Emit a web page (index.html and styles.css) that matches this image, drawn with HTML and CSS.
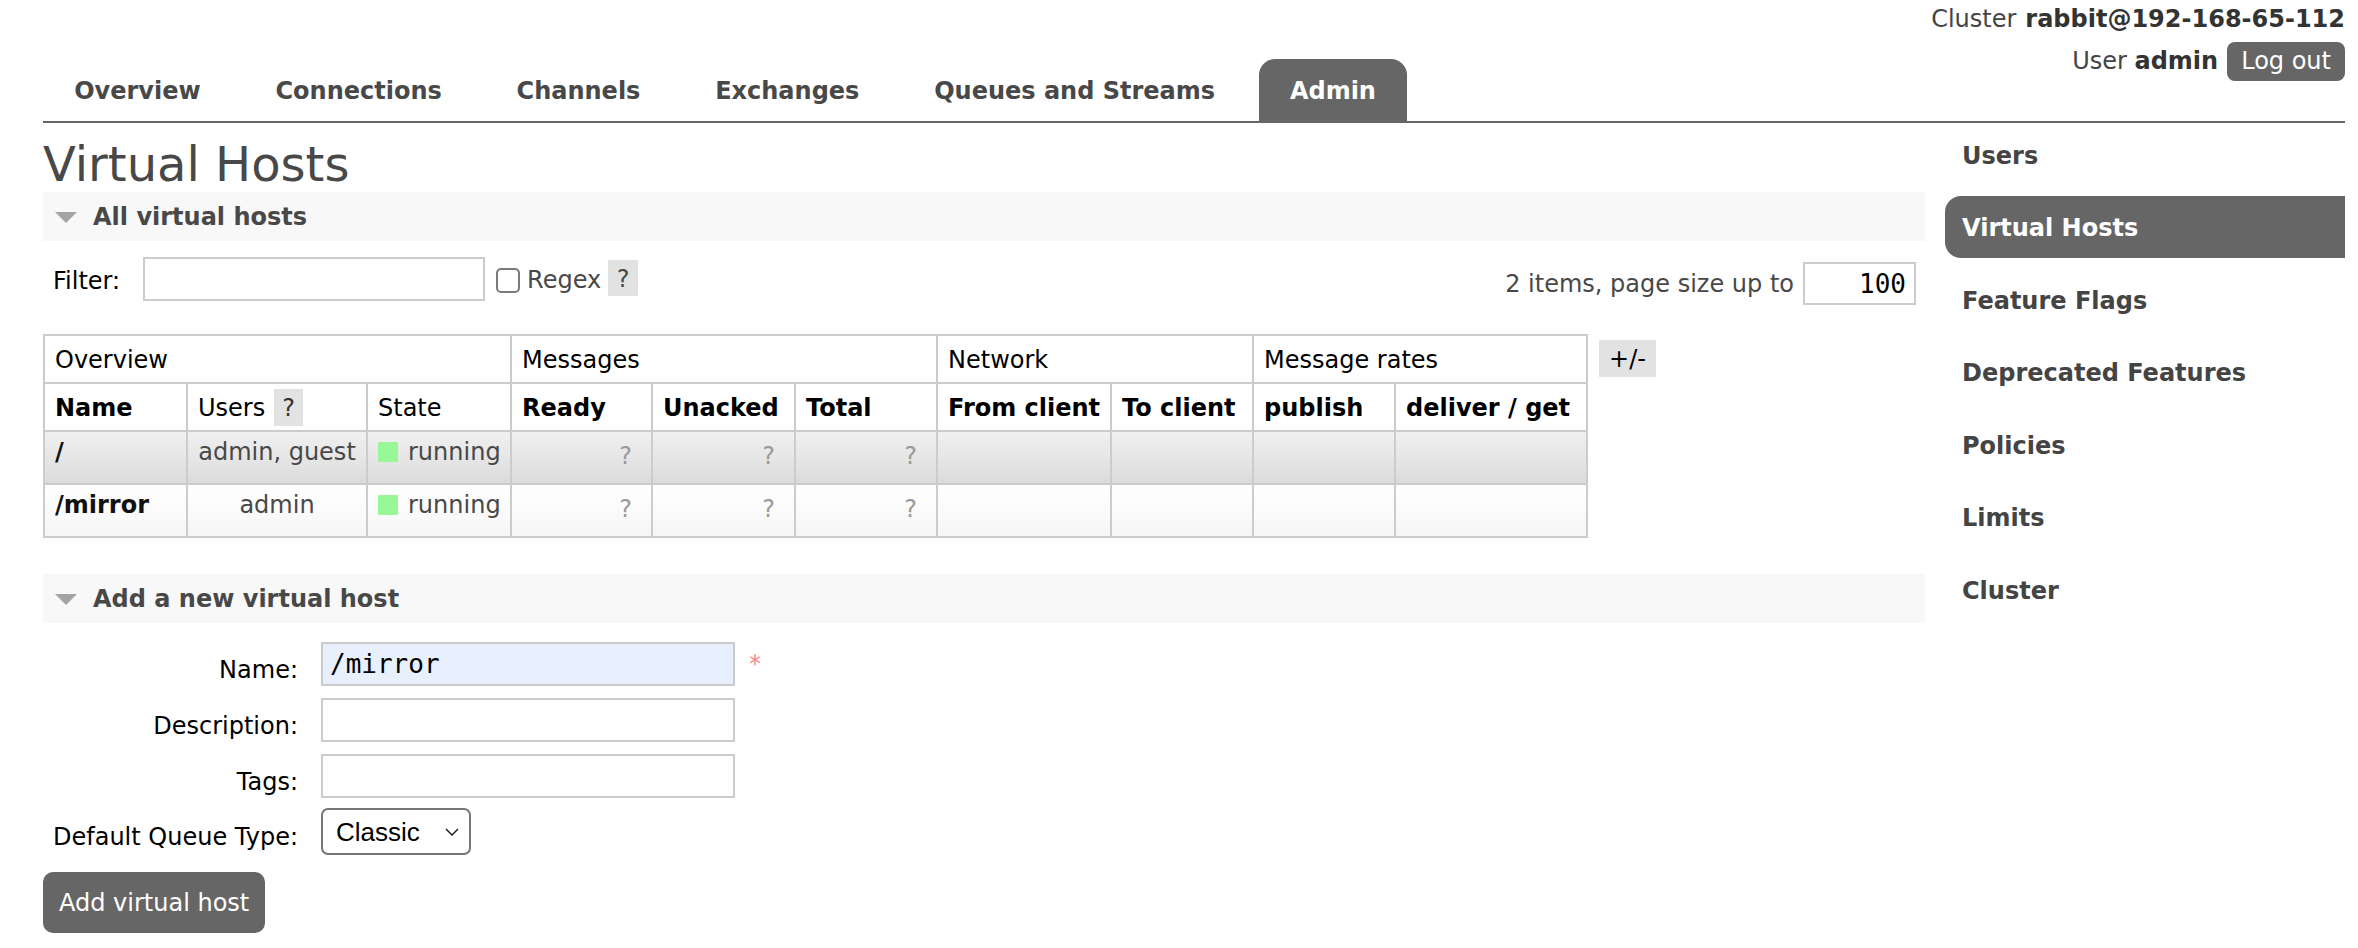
FILE: index.html
```html
<!DOCTYPE html>
<html lang="en">
<head>
<meta charset="utf-8">
<title>RabbitMQ Management: Virtual Hosts</title>
<link rel="stylesheet" href="styles.css">
</head>
<body>
<header class="header">
  <div class="topnav">
    <div class="tn-row tn-cluster">Cluster <b>rabbit@192-168-65-112</b></div>
    <div class="tn-row"><span>User <b>admin</b></span><button class="logout" type="button">Log out</button></div>
  </div>
  <ul class="menu">
    <li><a href="#">Overview</a></li>
    <li><a href="#">Connections</a></li>
    <li><a href="#">Channels</a></li>
    <li><a href="#">Exchanges</a></li>
    <li><a href="#">Queues and Streams</a></li>
    <li><a href="#" class="selected">Admin</a></li>
  </ul>
</header>

<div class="page">
  <main class="main">
    <h1 class="title">Virtual Hosts</h1>

    <section class="section">
      <h2 class="sec-title"><svg class="tri" width="22" height="11" viewBox="0 0 22 11"><polygon points="0,0 22,0 11,11" fill="#a4a4a4"/></svg>All virtual hosts</h2>

      <div class="filter">
        <div class="filter-left">
          <label class="filter-label" for="filter">Filter:</label>
          <input class="text filter-input" id="filter" type="text">
          <input class="check" id="regex" type="checkbox">
          <label class="regex-label" for="regex">Regex</label>
          <span class="help regex-help">?</span>
        </div>
        <div class="filter-right">
          <span class="count">2 items, page size up to</span>
          <input class="text truncate" type="text" value="100">
        </div>
      </div>

      <div class="table-wrap">
        <table class="list">
          <colgroup>
            <col class="w-name"><col class="w-users"><col class="w-state"><col class="w-ready"><col class="w-unacked"><col class="w-total"><col class="w-from"><col class="w-to"><col class="w-pub"><col class="w-del">
          </colgroup>
          <thead>
            <tr>
              <th colspan="3">Overview</th>
              <th colspan="3">Messages</th>
              <th colspan="2">Network</th>
              <th colspan="2">Message rates</th>
            </tr>
            <tr>
              <th class="b">Name</th>
              <th>Users<span class="help cell-help">?</span></th>
              <th>State</th>
              <th class="b">Ready</th>
              <th class="b">Unacked</th>
              <th class="b">Total</th>
              <th class="b">From client</th>
              <th class="b">To client</th>
              <th class="b">publish</th>
              <th class="b">deliver / get</th>
            </tr>
          </thead>
          <tbody>
            <tr class="alt1">
              <td class="vname">/</td>
              <td class="c">admin, guest</td>
              <td><span class="state"></span>running</td>
              <td class="q">?</td>
              <td class="q">?</td>
              <td class="q">?</td>
              <td></td><td></td><td></td><td></td>
            </tr>
            <tr class="alt2">
              <td class="vname">/mirror</td>
              <td class="c">admin</td>
              <td><span class="state"></span>running</td>
              <td class="q">?</td>
              <td class="q">?</td>
              <td class="q">?</td>
              <td></td><td></td><td></td><td></td>
            </tr>
          </tbody>
        </table>
        <span class="help plusminus">+/-</span>
      </div>
    </section>

    <section class="section section-add">
      <h2 class="sec-title"><svg class="tri" width="22" height="11" viewBox="0 0 22 11"><polygon points="0,0 22,0 11,11" fill="#a4a4a4"/></svg>Add a new virtual host</h2>

      <form class="vh-form">
        <div class="form-grid">
          <label class="f-label" for="vname">Name:</label>
          <div class="f-field"><input class="text f-input name-input" id="vname" type="text" value="/mirror"><span class="mand">*</span></div>

          <label class="f-label" for="vdesc">Description:</label>
          <div class="f-field"><input class="text f-input" id="vdesc" type="text"></div>

          <label class="f-label" for="vtags">Tags:</label>
          <div class="f-field"><input class="text f-input" id="vtags" type="text"></div>

          <label class="f-label f-label-select" for="vqt">Default Queue Type:</label>
          <div class="f-field select-field">
            <div class="select-wrap">
              <select id="vqt" class="qt-select"><option>Classic</option><option>Quorum</option><option>Stream</option></select>
              <svg class="chev" width="14" height="8" viewBox="0 0 14 8"><polyline points="1,1 7,7 13,1" fill="none" stroke="#222" stroke-width="1.5"/></svg>
            </div>
          </div>
        </div>
        <button class="submit" type="button">Add virtual host</button>
      </form>
    </section>
  </main>

  <aside class="rhs">
    <ul>
      <li><a href="#">Users</a></li>
      <li><a href="#" class="selected">Virtual Hosts</a></li>
      <li><a href="#">Feature Flags</a></li>
      <li><a href="#">Deprecated Features</a></li>
      <li><a href="#">Policies</a></li>
      <li><a href="#">Limits</a></li>
      <li><a href="#">Cluster</a></li>
    </ul>
  </aside>
</div>
</body>
</html>
```

FILE: styles.css
```css
html, body {
  margin: 0;
  padding: 0;
  background: #fff;
}
body {
  font-family: "DejaVu Sans", Verdana, sans-serif;
  font-size: 24px;
  line-height: 29px;
  color: #484848;
}
a {
  color: #444;
  text-decoration: none;
  font-weight: bold;
}
ul {
  list-style: none;
  margin: 0;
  padding: 0;
}

/* ---------- header ---------- */
.header {
  display: grid;
  height: 123px;
  padding: 0 13px 0 43px;
}
.topnav, .menu {
  grid-area: 1 / 1;
}
.topnav {
  justify-self: end;
  align-self: start;
  padding-top: 5px;
  display: flex;
  flex-direction: column;
  align-items: flex-end;
  gap: 8px;
  color: #444;
  position: relative;
  z-index: 1;
}
.tn-row {
  display: flex;
  align-items: baseline;
  gap: 9px;
}
.tn-row b {
  color: #333;
}
.logout {
  font-family: "DejaVu Sans", Verdana, sans-serif;
  font-size: 24px;
  line-height: 29px;
  padding: 5px 14px;
  background: #666;
  color: #fff;
  border: none;
  border-radius: 8px;
}
.menu {
  align-self: end;
  display: flex;
  border-bottom: 2px solid #666;
}
.menu li {
  margin-right: 12.4px;
}
.menu a {
  display: block;
  padding: 18px 31.2px 15px;
  line-height: 29px;
  color: #484848;
}
.menu a.selected {
  background: #666;
  color: #fff;
  border-radius: 16px 16px 0 0;
}

/* ---------- page ---------- */
.page {
  display: flex;
  gap: 20px;
  padding: 0 13px 0 43px;
}
.main {
  flex: 1;
  min-width: 0;
}
.rhs {
  width: 400px;
  flex: none;
}
.rhs li {
  margin-bottom: 10px;
}
.rhs a {
  display: block;
  padding: 18.5px 17px 15px;
  line-height: 29px;
  color: #444;
}
.rhs a.selected {
  background: #666;
  color: #fff;
  border-radius: 16px 0 0 16px;
}

.title {
  margin: 14px 0 0;
  font-size: 48px;
  line-height: 55px;
  font-weight: normal;
  color: #484848;
}
.sec-title {
  margin: 0;
  display: flex;
  align-items: center;
  background: #f8f8f8;
  padding: 11px 10px 9px 12px;
  font-size: 24px;
  line-height: 29px;
  font-weight: bold;
  color: #484848;
}
.tri {
  margin-right: 16px;
  margin-top: 0;
  flex: none;
}

/* ---------- filter ---------- */
.filter {
  margin-top: 16px;
  height: 49px;
  display: flex;
  justify-content: space-between;
  align-items: flex-start;
}
.filter-left {
  display: flex;
  align-items: flex-start;
  padding-left: 10px;
}
.filter-label {
  margin-top: 10px;
  margin-right: 23px;
  color: #000;
}
input.text {
  box-sizing: border-box;
  border: 2px solid #ccc;
  border-radius: 0;
  background: #fff;
  font-family: "DejaVu Sans Mono", "Liberation Mono", monospace;
  font-size: 26px;
  line-height: 30px;
  color: #000;
  margin: 0;
  outline: none;
}
.filter-input {
  width: 342px;
  height: 44px;
  padding: 5px 7px;
}
.check {
  appearance: none;
  -webkit-appearance: none;
  box-sizing: border-box;
  width: 24px;
  height: 25px;
  margin: 11px 0 0 11px;
  border: 2px solid #7a7a7a;
  border-radius: 5px;
  background: #fff;
}
.regex-label {
  margin: 9px 0 0 7px;
  color: #484848;
}
.help {
  display: inline-block;
  background: #e2e2e2;
  color: #484848;
  line-height: 29px;
}
.regex-help {
  margin: 3px 0 0 7px;
  padding: 4.5px 8.5px 2.5px;
}
.filter-right {
  display: flex;
  align-items: flex-start;
  padding-right: 9px;
}
.count {
  margin-top: 13px;
  color: #484848;
}
.truncate {
  width: 113px;
  height: 43px;
  margin: 5px 0 0 9px !important;
  padding: 5px 8px;
  text-align: right;
}

/* ---------- table ---------- */
.table-wrap {
  margin-top: 28px;
  display: flex;
  align-items: flex-start;
}
table.list {
  border-collapse: collapse;
  table-layout: fixed;
  width: 1545px;
  flex: none;
}
.w-name { width: 143px; }
.w-users { width: 180px; }
.w-state { width: 144px; }
.w-ready { width: 141px; }
.w-unacked { width: 143px; }
.w-total { width: 142px; }
.w-from { width: 174px; }
.w-to { width: 142px; }
.w-pub { width: 142px; }
.w-del { width: 192px; }

table.list th {
  border: 2px solid #ccc;
  padding: 10px 10px 7px;
  line-height: 29px;
  text-align: left;
  font-weight: normal;
  color: #000;
  white-space: nowrap;
  background: #fff;
}
table.list th.b {
  font-weight: bold;
}
.cell-help {
  margin: -5px 0 -3px 9px;
  padding: 5px 8px 3px;
  color: #333;
}
table.list td {
  border: 2px solid #ccc;
  padding: 6px 10px 16px;
  line-height: 29px;
  vertical-align: top;
  color: #484848;
  white-space: nowrap;
}
table.list tr.alt1 td {
  background: linear-gradient(#f0f0f0, #dcdcdc);
}
table.list tr.alt2 td {
  background: linear-gradient(#ffffff, #f6f6f6);
}
table.list td.vname {
  font-weight: bold;
  color: #111;
}
table.list td.c {
  text-align: center;
}
table.list td.q {
  text-align: right;
  color: #9a9a9a;
  padding: 10px 19px 12px 10px;
}
.state {
  display: inline-block;
  width: 20px;
  height: 20px;
  background: #98f898;
  margin-right: 10px;
  vertical-align: -2px;
}
.plusminus {
  margin: 6px 0 0 11px;
  padding: 5px 10px 3px;
  color: #000;
  white-space: nowrap;
}

/* ---------- add form ---------- */
.section-add {
  margin-top: 36px;
}
.vh-form {
  margin-top: 19px;
}
.form-grid {
  display: grid;
  grid-template-columns: 255px auto;
  column-gap: 23px;
  row-gap: 12px;
  justify-content: start;
}
.f-label {
  text-align: right;
  margin-top: 14px;
  color: #000;
  white-space: nowrap;
}
.f-label-select {
  margin-top: 13px;
}
.f-field {
  display: flex;
  align-items: flex-start;
}
.f-input {
  width: 414px;
  height: 44px;
  padding: 5px 7px;
}
.name-input {
  background: #e8f0fe !important;
}
.mand {
  color: #f88;
  margin: 8px 0 0 14px;
}
.select-field {
  margin-top: -2px;
}
.select-wrap {
  position: relative;
  width: 150px;
  height: 47px;
}
.qt-select {
  appearance: none;
  -webkit-appearance: none;
  box-sizing: border-box;
  width: 150px;
  height: 47px;
  margin: 0;
  padding: 0 36px 0 13px;
  border: 2px solid #767676;
  border-radius: 7px;
  background: #fff;
  font-family: "Liberation Sans", Arial, sans-serif;
  font-size: 26px;
  color: #000;
}
.chev {
  position: absolute;
  right: 12px;
  top: 20px;
  pointer-events: none;
}
.submit {
  display: block;
  margin-top: 17px;
  padding: 17px 16px 15px;
  background: #666;
  color: #fff;
  border: none;
  border-radius: 10px;
  font-family: "DejaVu Sans", Verdana, sans-serif;
  font-size: 24px;
  line-height: 29px;
}
```
